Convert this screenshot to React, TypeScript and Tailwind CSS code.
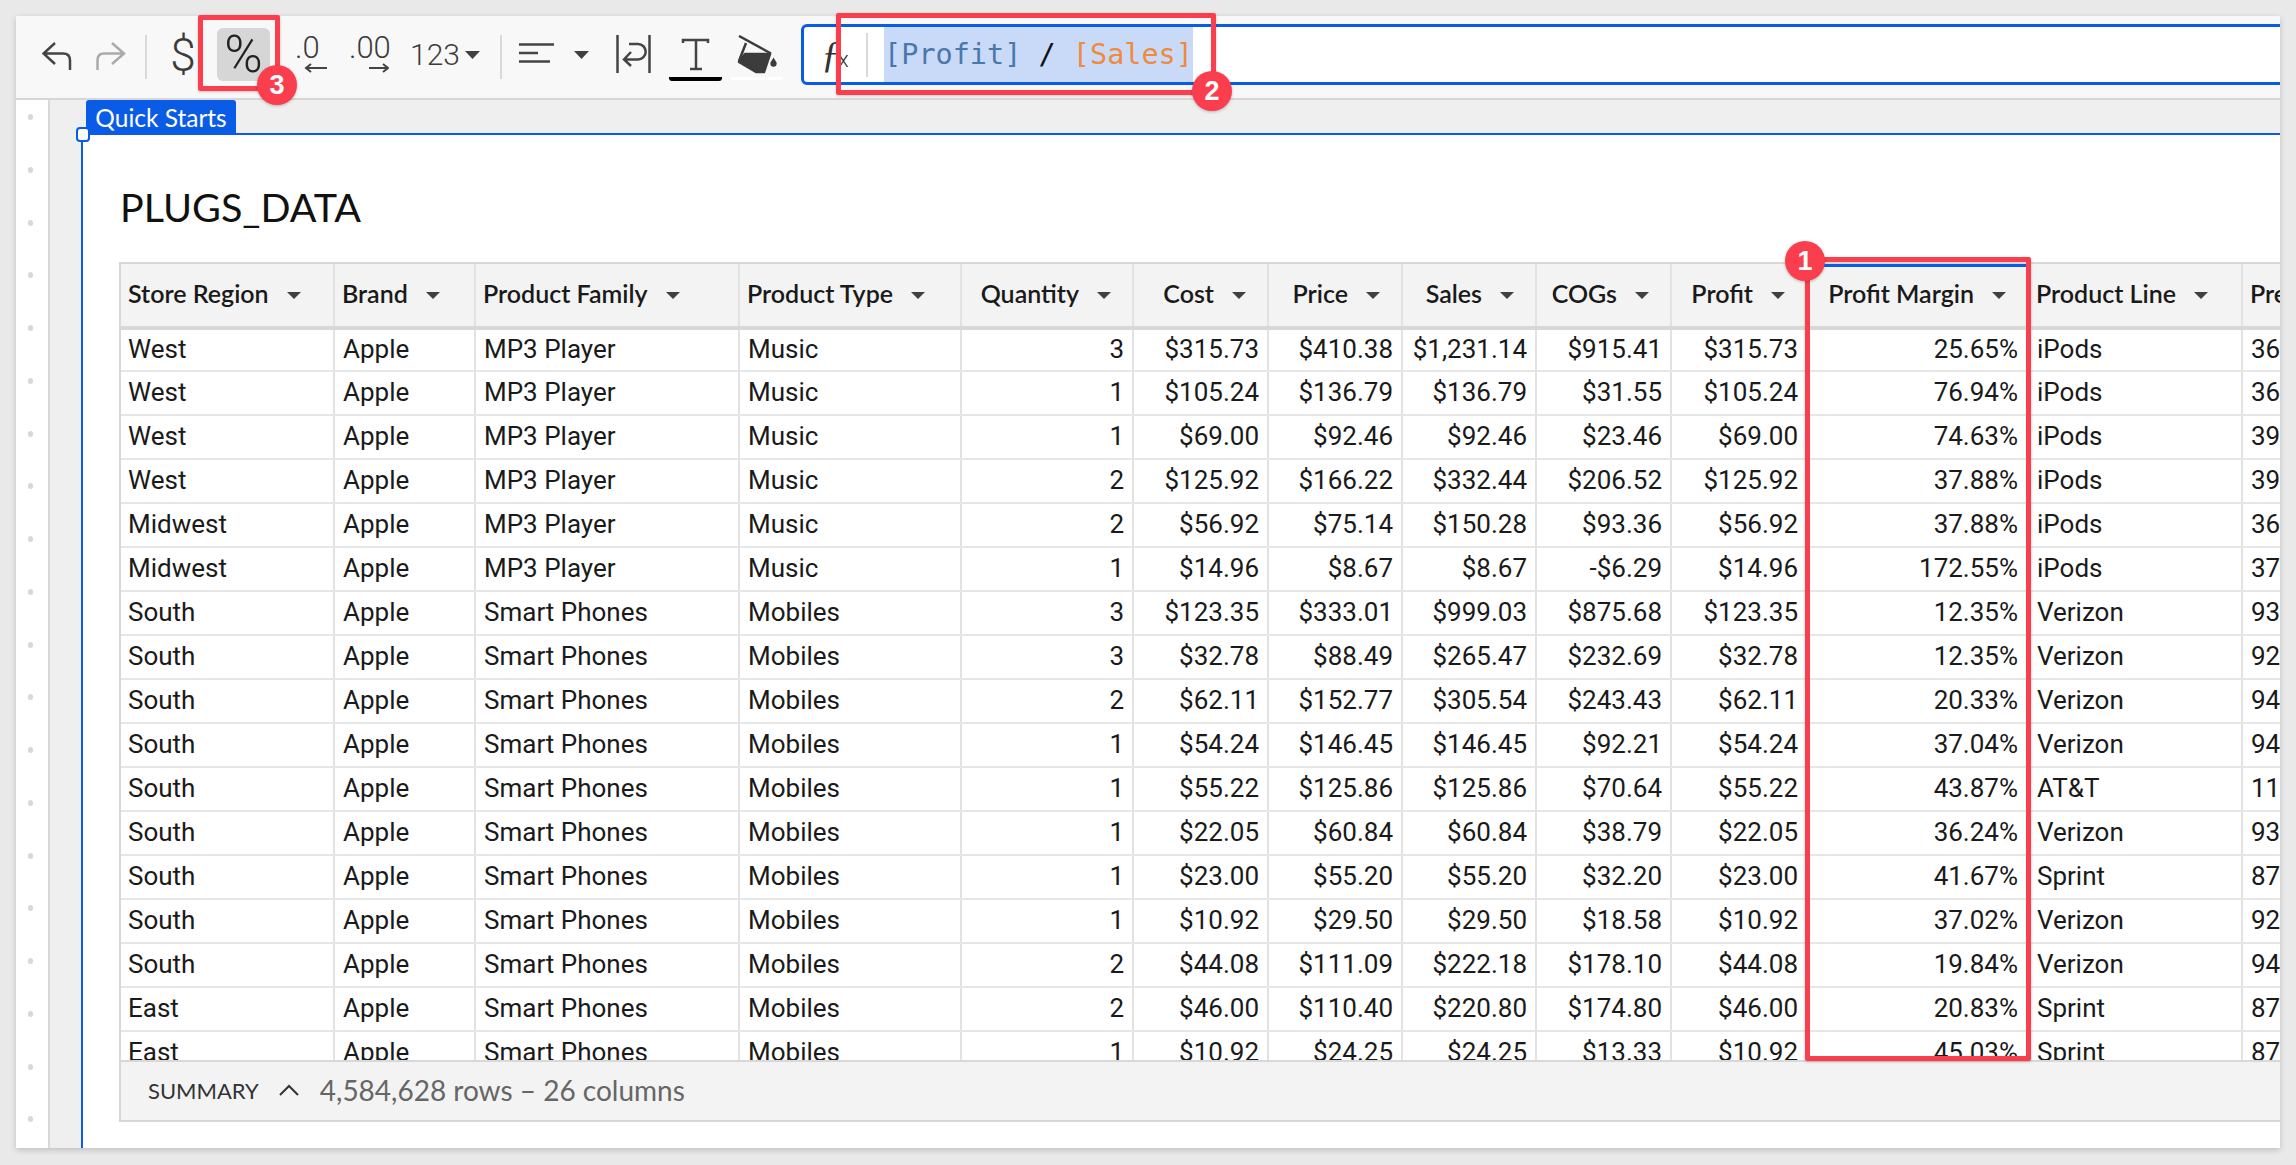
import React from "react";

const gridCols =
  "grid grid-cols-[214px_141px_264px_222px_172px_135px_134px_134px_135px_136px_221px_214px_80px]";

type Col = { label: string; right?: boolean; selected?: boolean };

const columns: Col[] = [
  { label: "Store Region" },
  { label: "Brand" },
  { label: "Product Family" },
  { label: "Product Type" },
  { label: "Quantity", right: true },
  { label: "Cost", right: true },
  { label: "Price", right: true },
  { label: "Sales", right: true },
  { label: "COGs", right: true },
  { label: "Profit", right: true },
  { label: "Profit Margin", right: true, selected: true },
  { label: "Product Line" },
  { label: "Pre" },
];

const rows = [
  ["West", "Apple", "MP3 Player", "Music", "3", "$315.73", "$410.38", "$1,231.14", "$915.41", "$315.73", "25.65%", "iPods", "36"],
  ["West", "Apple", "MP3 Player", "Music", "1", "$105.24", "$136.79", "$136.79", "$31.55", "$105.24", "76.94%", "iPods", "36"],
  ["West", "Apple", "MP3 Player", "Music", "1", "$69.00", "$92.46", "$92.46", "$23.46", "$69.00", "74.63%", "iPods", "39"],
  ["West", "Apple", "MP3 Player", "Music", "2", "$125.92", "$166.22", "$332.44", "$206.52", "$125.92", "37.88%", "iPods", "39"],
  ["Midwest", "Apple", "MP3 Player", "Music", "2", "$56.92", "$75.14", "$150.28", "$93.36", "$56.92", "37.88%", "iPods", "36"],
  ["Midwest", "Apple", "MP3 Player", "Music", "1", "$14.96", "$8.67", "$8.67", "-$6.29", "$14.96", "172.55%", "iPods", "37"],
  ["South", "Apple", "Smart Phones", "Mobiles", "3", "$123.35", "$333.01", "$999.03", "$875.68", "$123.35", "12.35%", "Verizon", "93"],
  ["South", "Apple", "Smart Phones", "Mobiles", "3", "$32.78", "$88.49", "$265.47", "$232.69", "$32.78", "12.35%", "Verizon", "92"],
  ["South", "Apple", "Smart Phones", "Mobiles", "2", "$62.11", "$152.77", "$305.54", "$243.43", "$62.11", "20.33%", "Verizon", "94"],
  ["South", "Apple", "Smart Phones", "Mobiles", "1", "$54.24", "$146.45", "$146.45", "$92.21", "$54.24", "37.04%", "Verizon", "94"],
  ["South", "Apple", "Smart Phones", "Mobiles", "1", "$55.22", "$125.86", "$125.86", "$70.64", "$55.22", "43.87%", "AT&T", "11"],
  ["South", "Apple", "Smart Phones", "Mobiles", "1", "$22.05", "$60.84", "$60.84", "$38.79", "$22.05", "36.24%", "Verizon", "93"],
  ["South", "Apple", "Smart Phones", "Mobiles", "1", "$23.00", "$55.20", "$55.20", "$32.20", "$23.00", "41.67%", "Sprint", "87"],
  ["South", "Apple", "Smart Phones", "Mobiles", "1", "$10.92", "$29.50", "$29.50", "$18.58", "$10.92", "37.02%", "Verizon", "92"],
  ["South", "Apple", "Smart Phones", "Mobiles", "2", "$44.08", "$111.09", "$222.18", "$178.10", "$44.08", "19.84%", "Verizon", "94"],
  ["East", "Apple", "Smart Phones", "Mobiles", "2", "$46.00", "$110.40", "$220.80", "$174.80", "$46.00", "20.83%", "Sprint", "87"],
  ["East", "Apple", "Smart Phones", "Mobiles", "1", "$10.92", "$24.25", "$24.25", "$13.33", "$10.92", "45.03%", "Sprint", "87"],
];

const dots = Array.from({ length: 20 }, (_, i) => i);

function Caret({ className }: { className?: string }) {
  return (
    <svg width="15" height="8" viewBox="0 0 15 8" className={className}>
      <path d="M0 0H15L7.5 8Z" fill="#404040" />
    </svg>
  );
}

function Badge({ n, className }: { n: number; className: string }) {
  return (
    <div
      className={`absolute w-[40px] h-[40px] rounded-full bg-[#fb3e4e] text-white flex items-center justify-center text-[27px] font-bold font-['Liberation_Sans',sans-serif] shadow-[0_1px_3px_rgba(0,0,0,0.25)] ${className}`}
    >
      {n}
    </div>
  );
}

function Toolbar() {
  return (
    <div className="h-[84px] shrink-0 bg-[#f8f8f8] border-b-2 border-[#d6d6d6] flex items-center text-[#3c3c3c] font-['Roboto',sans-serif]">
      {/* undo */}
      <svg width="30" height="30" viewBox="0 0 30 30" fill="none" stroke="#444" strokeWidth="2.5" className="ml-[26px]">
        <path d="M13 1L1.5 11.5L13 22M1.5 11.5H21Q28 11.5 28 18.5V28" />
      </svg>
      {/* redo */}
      <svg width="30" height="30" viewBox="0 0 30 30" fill="none" stroke="#aaa" strokeWidth="2.5" className="ml-[24px]">
        <path d="M16 1L28 11.5L16 22M28 11.5H8Q1.5 11.5 1.5 18.5V28" />
      </svg>
      <div className="ml-[19px] w-[2px] h-[44px] bg-[#d9d9d9]" />
      <div className="ml-[24px] w-[24px] flex justify-center text-[46px] leading-none font-light mb-[4px]">$</div>
      <div className="ml-[22px] w-[53px] h-[53px] rounded-md bg-[#d6d6d6] mb-[5px] flex items-center justify-center text-[52px] leading-none font-light text-[#222]">
        %
      </div>
      {/* decrease decimals */}
      <div className="ml-[25px] w-[33px] h-[42px] flex flex-col">
        <div className="h-[24px] text-[31px] leading-[24px] font-light">.0</div>
        <svg width="32" height="10" viewBox="0 0 32 10" fill="none" stroke="#444" strokeWidth="2" className="mt-[3px]">
          <path d="M32 5H11M16 1L11 5L16 9" />
        </svg>
      </div>
      {/* increase decimals */}
      <div className="ml-[21px] w-[41px] h-[42px] flex flex-col">
        <div className="h-[24px] text-[31px] leading-[24px] font-light">.00</div>
        <svg width="40" height="10" viewBox="0 0 40 10" fill="none" stroke="#444" strokeWidth="2" className="mt-[3px]">
          <path d="M20 5H39M34 1L39 5L34 9" />
        </svg>
      </div>
      <div className="ml-[20px] w-[48px] text-[30px] leading-none font-light mb-[5px]">123</div>
      <Caret className="ml-[7px] mb-[5px]" />
      <div className="ml-[20px] w-[2px] h-[44px] bg-[#d9d9d9]" />
      {/* align */}
      <svg width="35" height="20" viewBox="0 0 35 20" fill="none" stroke="#444" strokeWidth="2.5" className="ml-[17px] mb-[8px]">
        <path d="M0 1.5H35M0 10H19M0 18.5H31" />
      </svg>
      <Caret className="ml-[20px] mb-[5px]" />
      {/* wrap */}
      <svg width="35" height="40" viewBox="0 0 35 40" fill="none" stroke="#444" strokeWidth="2.5" className="ml-[27px] mb-[6px]">
        <path d="M1.5 1V39M33.5 1V39M13 10H22A7.7 7.7 0 0 1 22 25.4H8M15 18L8 25.4L15 32" />
      </svg>
      {/* text colour */}
      <svg width="53" height="46" viewBox="0 0 53 46" fill="none" className="ml-[18px] mt-[2px]">
        <path d="M14 8V5H39V8M27 5V34M21 34H33" stroke="#444" strokeWidth="2.5" />
        <path d="M0 42H53V43Q53 46 50 46H3Q0 46 0 43Z" fill="#000" />
      </svg>
      {/* fill colour */}
      <svg width="52" height="46" viewBox="0 0 52 46" fill="none" className="ml-[9px] mt-[2px]">
        <path d="M8 1L40 18.5" stroke="#3c3c3c" strokeWidth="2.5" />
        <path d="M15 8L8 26" stroke="#3c3c3c" strokeWidth="2.5" />
        <path d="M8 27L14 19H39L33 37H25Z" fill="#3c3c3c" stroke="#3c3c3c" strokeWidth="2.5" strokeLinejoin="round" />
        <path d="M42.5 22.5L45.5 27.5A3.2 3.2 0 1 1 39.5 27.5Z" fill="#3c3c3c" />
        <rect x="0" y="42" width="52" height="3" fill="#fff" />
      </svg>
      {/* formula */}
      <div className="ml-[18px] -mr-[10px] flex-1 h-[61px] mb-[5px] border-[3px] border-[#0a5ce6] rounded-md bg-white flex items-center">
        <div className="ml-[17px] w-[27px] flex items-end h-[34px] mb-[2px] text-[#333]">
          <span className="font-['Liberation_Serif',serif] italic text-[38px] leading-[34px] font-light">ƒ</span>
          <span className="text-[22px] leading-[22px] font-light -ml-[2px]">x</span>
        </div>
        <div className="ml-[18px] w-[2px] h-[44px] bg-[#d9d9d9]" />
        <div className="ml-[16px] h-full w-[309px] pt-[2px] bg-[#c9daf8] flex items-center justify-center font-['DejaVu_Sans_Mono',monospace] text-[28.5px] whitespace-pre">
          <span className="text-[#4a78ab]">[Profit]</span>
          <span className="text-[#111]"> / </span>
          <span className="text-[#f08a3c]">[Sales]</span>
        </div>
      </div>
    </div>
  );
}

function DataTable() {
  return (
    <div className="mt-[29px] border-t-2 border-l-2 border-b-2 border-[#d8d8d8] overflow-hidden">
      <div className={`${gridCols} h-[66px] bg-[#f3f3f3] border-b-4 border-[#d8d8d8]`}>
        {columns.map((c) => (
          <div
            key={c.label}
            className={`flex items-center whitespace-nowrap overflow-hidden border-r-2 font-['Lato',sans-serif] font-semibold text-[25px] text-[#1a1a1a] ${
              c.right ? "justify-end pr-[21px]" : "pl-[7px]"
            } ${c.selected ? "border-[#0a5ce6] border-t-[3px] pb-[3px]" : "border-[#e2e2e2]"}`}
          >
            <span className="pb-[2px]">{c.label}</span>
            {c.label !== "Pre" && (
              <svg width="14" height="7" viewBox="0 0 14 7" className="ml-[18px]">
                <path d="M0 0H14L7 7Z" fill="#404040" />
              </svg>
            )}
          </div>
        ))}
      </div>
      <div className="h-[730px] overflow-hidden">
        {rows.map((row, i) => (
          <div
            key={i}
            className={`${gridCols} ${i === 0 ? "h-[42px]" : "h-[44px]"} border-b-2 border-[#e6e6e6]`}
          >
            {row.map((v, j) => (
              <div
                key={j}
                className={`flex items-center whitespace-nowrap border-r-2 pb-[1px] text-[26px] text-[#1a1a1a] ${
                  columns[j].right ? "justify-end" : j === 0 ? "pl-[7px]" : "pl-[8px]"
                } ${columns[j].right && !columns[j].selected ? "pr-[8px]" : ""} ${
                  columns[j].selected ? "border-[#0a5ce6] pr-[9px]" : "border-[#e2e2e2]"
                }`}
              >
                {v}
              </div>
            ))}
          </div>
        ))}
      </div>
      <div className="h-[60px] pb-[2px] bg-[#f3f3f3] border-t-2 border-[#d8d8d8] flex items-center pl-[27px] font-['Lato',sans-serif]">
        <span className="text-[#333] text-[22px]">SUMMARY</span>
        <svg width="20" height="12" viewBox="0 0 20 12" fill="none" stroke="#333" strokeWidth="2" className="ml-[20px]">
          <path d="M1 11L10 2L19 11" />
        </svg>
        <span className="ml-[21px] text-[#666] text-[28px]">4,584,628 rows – 26 columns</span>
      </div>
    </div>
  );
}

export default function App() {
  return (
    <div className="relative w-[2296px] h-[1165px] bg-[#e9e9e9] p-4 overflow-hidden font-['Roboto',sans-serif]">
      <div className="w-[2264px] h-[1132px] flex flex-col overflow-hidden bg-white shadow-[0_2px_6px_rgba(0,0,0,0.18)]">
        <Toolbar />
        <div className="flex-1 flex min-h-0">
          <div className="w-[34px] shrink-0 bg-white border-r-2 border-[#d8d8d8] pl-[12px] pt-[14px] flex flex-col gap-[46.75px]">
            {dots.map((d) => (
              <div key={d} className="w-[5px] h-[6px] rounded-full bg-[#d8d8d8]" />
            ))}
          </div>
          <div className="flex-1 min-w-0 bg-[#efefef] pl-[31px] flex flex-col relative">
            <div className="ml-[5px] w-[150px] h-[33px] shrink-0 rounded-t-[3px] bg-[#0a5ce6] text-white font-['Lato',sans-serif] text-[24.5px] leading-[35px] text-center">
              Quick Starts
            </div>
            <div className="relative flex-1 min-h-0 bg-white border-l-2 border-t-2 border-[#0a5ce6] pl-[36px] pt-[46px]">
              <div className="absolute -left-[7px] -top-[8px] w-[14px] h-[15px] rounded-[4px] bg-white border-2 border-[#0a5ce6]" />
              <div className="h-[52px] pl-[1px] leading-[52px] text-[39.5px] text-[#111] font-['Lato',sans-serif]">PLUGS_DATA</div>
              <DataTable />
            </div>
          </div>
        </div>
      </div>

      {/* annotations */}
      <div className="absolute left-[1805px] top-[257px] w-[226px] h-[804px] border-[5px] border-[#fb3e4e] rounded-[2px] shadow-[0_1px_3px_rgba(0,0,0,0.2)]" />
      <div className="absolute left-[836px] top-[13px] w-[380px] h-[82px] border-[5px] border-[#fb3e4e] rounded-[2px] shadow-[0_1px_3px_rgba(0,0,0,0.2)]" />
      <div className="absolute left-[198px] top-[15px] w-[82px] h-[76px] border-[5px] border-[#fb3e4e] rounded-[2px] shadow-[0_1px_3px_rgba(0,0,0,0.2)]" />
      <Badge n={1} className="left-[1785px] top-[241px]" />
      <Badge n={2} className="left-[1192px] top-[71px]" />
      <Badge n={3} className="left-[257px] top-[65px]" />
    </div>
  );
}
